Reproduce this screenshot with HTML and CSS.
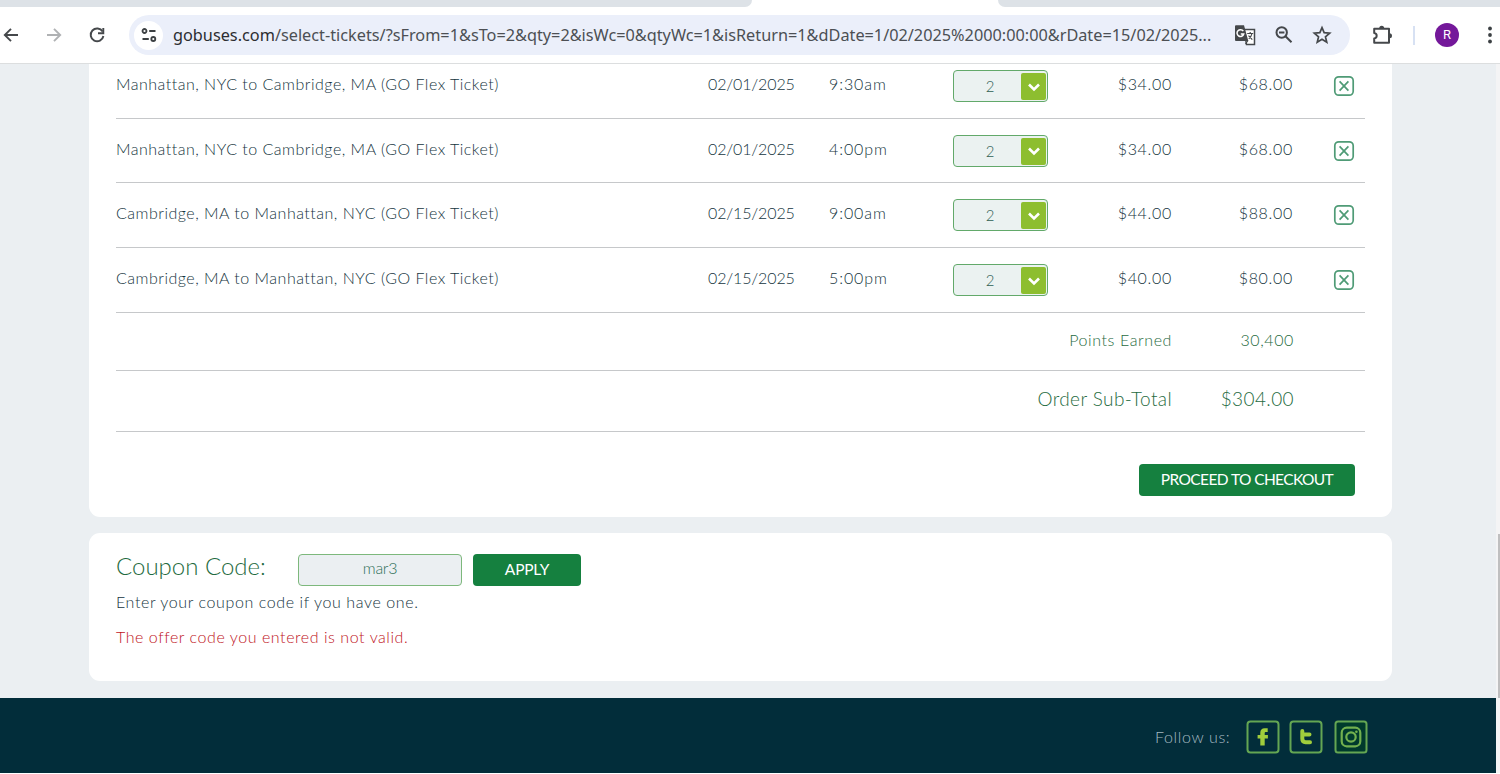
FILE: index.html
```
<!DOCTYPE html>
<html lang="en">
<head>
    <meta charset="UTF-8">
    <meta name="viewport" content="width=device-width, initial-scale=1.0">
    <title>Select Tickets</title>
    <link rel="stylesheet" href="styles.css">
</head>
<body>
    <!-- icons used more than once -->
    <svg class="defs" width="0" height="0">
        <symbol id="chevron" viewBox="0 0 14 10"><path d="M2 2.5l5 5 5-5" fill="none" stroke="#fff" stroke-width="2.6"/></symbol>
        <symbol id="remove" viewBox="0 0 22 22"><rect x="1.8" y="1.8" width="18.4" height="18.4" rx="4" fill="none" stroke="#4f9b76" stroke-width="1.7"/><path d="M6.6 6.4l8.8 9.2M15.4 6.4l-8.8 9.2" stroke="#4f9b76" stroke-width="1.7"/></symbol>
    </svg>

    <div class="tab-strip">
        <div class="tab-left"></div>
        <div class="tab-right"></div>
    </div>
    <div class="toolbar">
        <svg class="nav-icon" width="20" height="20" viewBox="0 0 20 20" fill="none" stroke="#45484b" stroke-width="1.9"><path d="M17 10H4M10 3.8L3.8 10l6.2 6.2"/></svg>
        <svg class="nav-icon" width="20" height="20" viewBox="0 0 20 20" fill="none" stroke="#b0b2b4" stroke-width="1.9"><path d="M3 10h13M10 3.8l6.2 6.2-6.2 6.2"/></svg>
        <svg class="nav-icon" width="20" height="20" viewBox="0 0 20 20" fill="none" stroke="#45484b" stroke-width="1.9"><path d="M15.6 6.6A6.4 6.4 0 1 0 16.4 11"/><path d="M16.3 3v5.3H11"/></svg>
        <div class="address-bar">
            <span class="site-info">
                <svg width="18" height="18" viewBox="0 0 18 18" fill="none" stroke="#3c4043" stroke-width="1.8"><circle cx="4.5" cy="5" r="2"/><path d="M9.2 5h6.3M2.5 13h6.3"/><circle cx="13.3" cy="13" r="2"/></svg>
            </span>
            <span class="url"><b>gobuses.com</b>/select-tickets/?sFrom=1&amp;sTo=2&amp;qty=2&amp;isWc=0&amp;qtyWc=1&amp;isReturn=1&amp;dDate=1/02/2025%2000:00:00&amp;rDate=15/02/2025...</span>
            <svg width="22" height="22" viewBox="0 0 22 22"><path d="M10 5.500h10.500v15H12.500z" fill="#fff" stroke="#45484b" stroke-width="1.500"/><path d="M2 1.200h8l4.300 15.800H2a1 1 0 0 1-1-1V2.200a1 1 0 0 1 1-1z" fill="#45484b"/><path d="M9.300 7.200A3.400 3.400 0 1 0 9.700 10H6.800" fill="none" stroke="#fff" stroke-width="1.500"/><path d="M13.200 9.500h6M16.200 8v1.500M18 9.500c-.5 2.400-1.700 4-3.200 5.200M14.500 11.700l3.800 4M11.500 20l2.500-3.500" fill="none" stroke="#45484b" stroke-width="1.200"/></svg>
            <svg width="20" height="20" viewBox="0 0 20 20" fill="none" stroke="#45484b" stroke-width="2"><circle cx="7.700" cy="7.500" r="5.200"/><path d="M11.500 11.300l6 6M5 7.500h5.400"/></svg>
            <svg width="20" height="20" viewBox="0 0 20 20" fill="none" stroke="#45484b" stroke-width="1.7"><path d="M10 2.600l2.150 5.100 5.500.47-4.200 3.600 1.300 5.400L10 14.300l-4.750 2.870 1.300-5.400-4.200-3.600 5.500-.47z"/></svg>
        </div>
        <svg class="puzzle" width="22" height="22" viewBox="0 0 22 22"><path d="M3.200 4.700H18v14.100H3.200v-4.300c3.300-.4 3.300-5 0-5.400z" fill="none" stroke="#45484b" stroke-width="2" stroke-linejoin="round"/><path d="M8.200 4.200a2.500 2.500 0 0 1 5 0zM18.500 9.300a2.500 2.500 0 0 1 0 5z" fill="#45484b"/></svg>
        <span class="divider"></span>
        <span class="avatar">R</span>
        <svg class="menu" width="6" height="20" viewBox="0 0 6 20" fill="#3c4043"><circle cx="3" cy="3.500" r="1.900"/><circle cx="3" cy="10" r="1.900"/><circle cx="3" cy="16.500" r="1.900"/></svg>
    </div>

    <div class="viewport">
        <div class="page">
            <div class="card cart">
                <div class="row">
                    <span class="name">Manhattan, NYC to Cambridge, MA (GO Flex Ticket)</span>
                    <span class="date">02/01/2025</span>
                    <span class="time">9:30am</span>
                    <div class="select"><span>2</span><i><svg width="14" height="10"><use href="#chevron"/></svg></i></div>
                    <span class="price">$34.00</span>
                    <span class="price">$68.00</span>
                    <svg class="remove" width="22" height="22"><use href="#remove"/></svg>
                </div>
                <div class="row short">
                    <span class="name">Manhattan, NYC to Cambridge, MA (GO Flex Ticket)</span>
                    <span class="date">02/01/2025</span>
                    <span class="time">4:00pm</span>
                    <div class="select"><span>2</span><i><svg width="14" height="10"><use href="#chevron"/></svg></i></div>
                    <span class="price">$34.00</span>
                    <span class="price">$68.00</span>
                    <svg class="remove" width="22" height="22"><use href="#remove"/></svg>
                </div>
                <div class="row">
                    <span class="name">Cambridge, MA to Manhattan, NYC (GO Flex Ticket)</span>
                    <span class="date">02/15/2025</span>
                    <span class="time">9:00am</span>
                    <div class="select"><span>2</span><i><svg width="14" height="10"><use href="#chevron"/></svg></i></div>
                    <span class="price">$44.00</span>
                    <span class="price">$88.00</span>
                    <svg class="remove" width="22" height="22"><use href="#remove"/></svg>
                </div>
                <div class="row">
                    <span class="name">Cambridge, MA to Manhattan, NYC (GO Flex Ticket)</span>
                    <span class="date">02/15/2025</span>
                    <span class="time">5:00pm</span>
                    <div class="select"><span>2</span><i><svg width="14" height="10"><use href="#chevron"/></svg></i></div>
                    <span class="price">$40.00</span>
                    <span class="price">$80.00</span>
                    <svg class="remove" width="22" height="22"><use href="#remove"/></svg>
                </div>
                <div class="summary points">
                    <span class="label">Points Earned</span>
                    <span class="value">30,400</span>
                </div>
                <div class="summary subtotal">
                    <span class="label">Order Sub-Total</span>
                    <span class="value">$304.00</span>
                </div>
                <div class="checkout">
                    <button class="btn btn-checkout">PROCEED TO CHECKOUT</button>
                </div>
            </div>

            <div class="card coupon">
                <div class="coupon-form">
                    <label class="coupon-label" for="coupon">Coupon Code:</label>
                    <input class="coupon-input" type="text" id="coupon" value="mar3">
                    <button class="btn btn-apply">APPLY</button>
                </div>
                <p class="hint">Enter your coupon code if you have one.</p>
                <p class="error">The offer code you entered is not valid.</p>
            </div>

            <div class="footer">
                <span class="follow">Follow us:</span>
                <svg class="facebook" width="34" height="34" viewBox="0 0 34 34"><rect x="1.500" y="1.500" width="31" height="31" rx="3" fill="none" stroke="#64a653" stroke-width="2"/><path d="M21.700 8.300v3.800h-1.700c-1 0-1.300.5-1.300 1.300v1.500h3.200v3.600h-3.200v7h-4.400v-7h-2.700v-3.600h2.700v-2.100c0-2.900 1.600-4.500 4.300-4.500z" fill="#a0cd3c"/></svg>
                <svg class="twitter" width="34" height="34" viewBox="0 0 34 34"><rect x="1.500" y="1.500" width="31" height="31" rx="3" fill="none" stroke="#64a653" stroke-width="2"/><path d="M13.300 11v7.800c0 2.300 1.200 3.400 3.300 3.400h4.400M13.300 14.600h7.200" fill="none" stroke="#a0cd3c" stroke-width="4" stroke-linecap="round"/></svg>
                <svg class="instagram" width="34" height="34" viewBox="0 0 34 34"><rect x="1.500" y="1.500" width="31" height="31" rx="2.500" fill="#003a2c" stroke="#64a653" stroke-width="2"/><rect x="7.700" y="7.700" width="18.600" height="18.600" rx="5" fill="none" stroke="#72b04f" stroke-width="2.200"/><circle cx="17" cy="17" r="4.700" fill="none" stroke="#72b04f" stroke-width="2.200"/><circle cx="22.400" cy="11.700" r="1.300" fill="#72b04f"/></svg>
            </div>
        </div>
        <div class="scrollbar"><div class="thumb"></div></div>
    </div>
</body>
</html>
```
FILE: styles.css
```
* {
    box-sizing: border-box;
}
body {
    margin: 0;
    height: 774px;
    overflow: hidden;
    font-family: Lato, sans-serif;
    font-weight: 300;
    background-color: #fff;
}
.defs {
    display: block;
}

/* browser */
.tab-strip {
    display: flex;
    justify-content: space-between;
    height: 8px;
}
.tab-left, .tab-right {
    height: 7px;
    background-color: #dde2e7;
}
.tab-left {
    width: 752px;
    border-bottom-right-radius: 8px;
}
.tab-right {
    width: 502px;
    border-bottom-left-radius: 8px;
}
.toolbar {
    display: flex;
    align-items: center;
    height: 56px;
    padding: 0 0 1px 1px;
    border-bottom: 1px solid #dcdedf;
}
.nav-icon {
    margin-right: 23px;
}
.address-bar {
    display: flex;
    align-items: center;
    width: 1221px;
    height: 40px;
    margin-left: -1px;
    padding-left: 5px;
    border-radius: 20px;
    background-color: #ebeffa;
}
.site-info {
    display: flex;
    align-items: center;
    justify-content: center;
    width: 29px;
    height: 29px;
    border-radius: 50%;
    background-color: #fff;
}
.url {
    width: 1061px;
    margin-left: 10px;
    white-space: nowrap;
    font-family: "Noto Sans", sans-serif;
    font-size: 16.28px;
    font-weight: 400;
    color: #4c4f54;
}
.url b {
    font-weight: 400;
    color: #2b2d31;
}
.address-bar > svg {
    margin-right: 18px;
    flex-shrink: 0;
}
.puzzle {
    margin-left: 21px;
}
.divider {
    width: 2px;
    height: 19px;
    margin-left: 20px;
    background-color: #d7e1f3;
}
.avatar {
    width: 24px;
    height: 24px;
    margin-left: 20px;
    border-radius: 50%;
    background-color: #74189a;
    color: #fff;
    font-family: Roboto, sans-serif;
    font-size: 13px;
    font-weight: 400;
    line-height: 24px;
    text-align: center;
}
.menu {
    margin-left: 28px;
}

/* page */
.viewport {
    display: flex;
    height: 709px;
    overflow: hidden;
}
.page {
    width: 1496px;
    background-color: #ebeff2;
}
.card {
    width: 1303px;
    margin-left: 89px;
    padding: 0 27px;
    border-radius: 11px;
    background-color: #fff;
}
.cart {
    height: 463px;
    margin-top: -10px;
}
.row {
    display: grid;
    grid-template-columns: 592px 121px 124px 96px 123px 121px 1fr;
    align-items: center;
    height: 65px;
    border-bottom: 1px solid #c6c8ca;
    font-size: 16px;
    color: #143440;
}
.row.short {
    height: 64px;
}
.name, .date, .time, .price {
    padding-bottom: 5px;
    white-space: nowrap;
}
.name {
    letter-spacing: 0.5px;
}
.date {
    letter-spacing: -0.15px;
}
.time {
    letter-spacing: 0.9px;
}
.price {
    text-align: right;
    letter-spacing: 0.7px;
}
.select {
    display: flex;
    width: 95px;
    height: 32px;
    padding: 2px 1px 1px 0;
    border: 1px solid #62a96a;
    border-radius: 4px;
    background-color: #ebf2f1;
}
.select span {
    flex: 1;
    padding-left: 5px;
    font-size: 15px;
    line-height: 27px;
    text-align: center;
    color: #2f6052;
}
.select i {
    display: flex;
    align-items: center;
    justify-content: center;
    width: 25px;
    border-radius: 2px;
    background-color: #8dbe2f;
}
.remove {
    justify-self: end;
    margin-right: 10px;
}
.summary {
    display: flex;
    justify-content: flex-end;
    align-items: center;
    padding-right: 71px;
    border-bottom: 1px solid #c6c8ca;
    color: #1f6b41;
}
.summary .value {
    width: 122px;
    text-align: right;
}
.points {
    height: 58px;
    padding-bottom: 4px;
    font-size: 16px;
    letter-spacing: 0.6px;
}
.subtotal {
    height: 61px;
    padding-bottom: 5px;
    font-size: 19px;
    letter-spacing: 0.4px;
}
.checkout {
    display: flex;
    justify-content: flex-end;
    padding: 32px 10px 0 0;
}
.btn {
    height: 32px;
    padding: 0 0 3px;
    border: none;
    border-radius: 4px;
    background-color: #15803f;
    color: #fff;
    font-family: Lato, sans-serif;
    font-size: 15.5px;
    font-weight: 400;
    letter-spacing: -0.2px;
    cursor: pointer;
}
.btn-checkout {
    width: 216px;
    letter-spacing: -0.6px;
}
.btn-apply {
    width: 108px;
    margin-left: 11px;
}
.coupon {
    height: 148px;
    margin-top: 16px;
    padding-top: 21px;
}
.coupon-form {
    display: flex;
}
.coupon-label {
    width: 182px;
    font-size: 24px;
    line-height: 24px;
    color: #1f6b41;
}
.coupon-input {
    width: 164px;
    height: 32px;
    padding: 0 0 5px;
    border: 1px solid #7db87c;
    border-radius: 4px;
    background-color: #ebeff2;
    color: #2f7059;
    font-family: Lato, sans-serif;
    font-size: 16px;
    font-weight: 300;
    letter-spacing: -0.3px;
    text-align: center;
}
.hint, .error {
    margin: 0;
    font-size: 16px;
    line-height: 35px;
}
.hint {
    margin-top: -2px;
    letter-spacing: 0.6px;
    color: #143440;
}
.error {
    letter-spacing: 0.56px;
    color: #c0141c;
}
.footer {
    display: flex;
    height: 75px;
    margin-top: 17px;
    padding: 22px 0 0 1155px;
    background-color: #022d3a;
}
.follow {
    width: 91px;
    font-size: 16px;
    line-height: 34px;
    letter-spacing: 0.65px;
    color: #a5bac2;
}
.twitter {
    margin-left: 9px;
}
.instagram {
    margin-left: 11px;
}
.scrollbar {
    width: 4px;
    padding: 470px 0 0 2px;
    background-color: #f4f4f5;
}
.thumb {
    height: 164px;
    background-color: #bfbfc0;
}
```
